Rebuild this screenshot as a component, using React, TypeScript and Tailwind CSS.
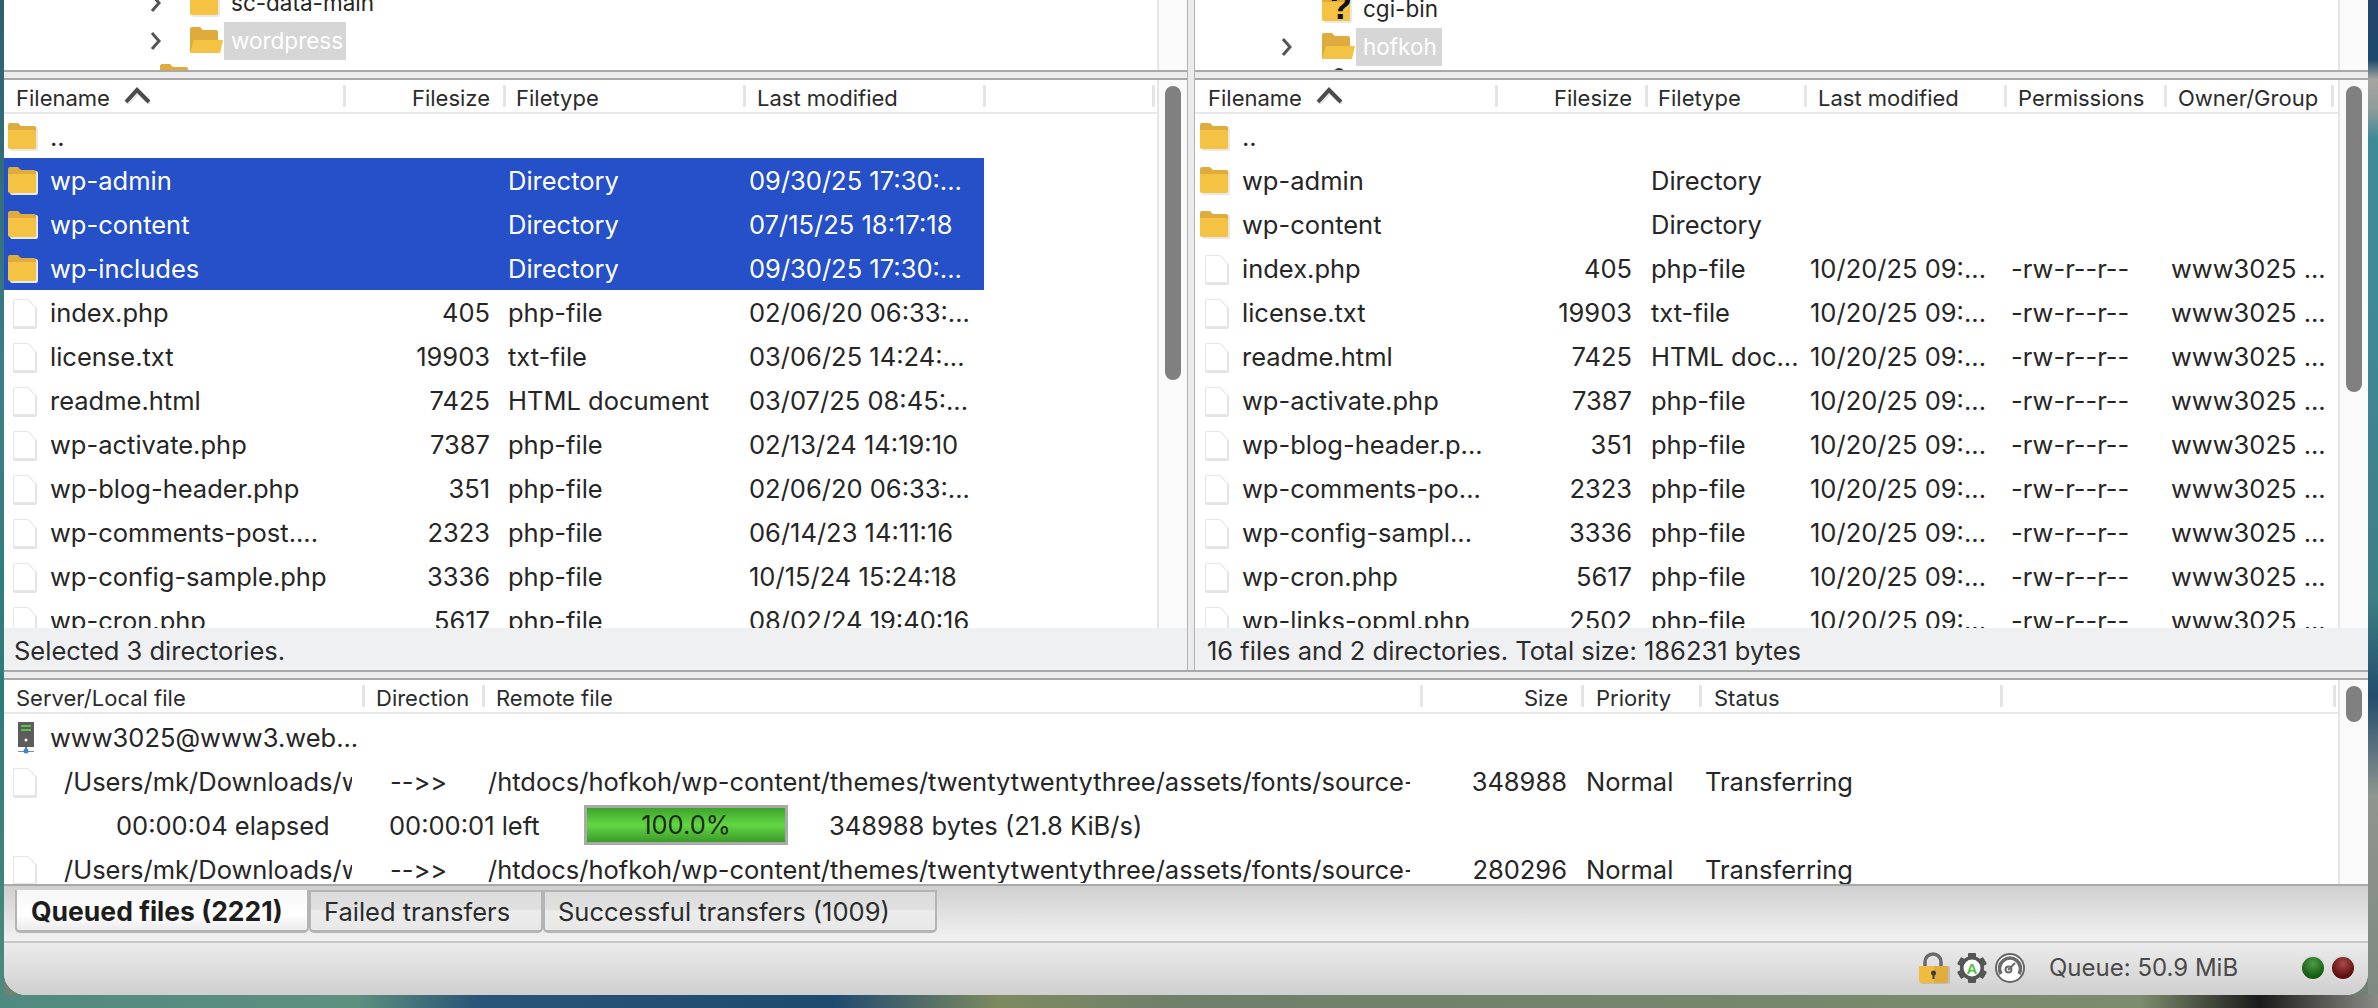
// App.tsx
import React from 'react';

const leftFiles = [
  ['wp-admin', '', 'Directory', '09/30/25 17:30:...'],
  ['wp-content', '', 'Directory', '07/15/25 18:17:18'],
  ['wp-includes', '', 'Directory', '09/30/25 17:30:...'],
  ['index.php', '405', 'php-file', '02/06/20 06:33:...'],
  ['license.txt', '19903', 'txt-file', '03/06/25 14:24:...'],
  ['readme.html', '7425', 'HTML document', '03/07/25 08:45:...'],
  ['wp-activate.php', '7387', 'php-file', '02/13/24 14:19:10'],
  ['wp-blog-header.php', '351', 'php-file', '02/06/20 06:33:...'],
  ['wp-comments-post....', '2323', 'php-file', '06/14/23 14:11:16'],
  ['wp-config-sample.php', '3336', 'php-file', '10/15/24 15:24:18'],
  ['wp-cron.php', '5617', 'php-file', '08/02/24 19:40:16'],
];

const rightFiles = [
  ['index.php', '405', 'php-file'],
  ['license.txt', '19903', 'txt-file'],
  ['readme.html', '7425', 'HTML doc...'],
  ['wp-activate.php', '7387', 'php-file'],
  ['wp-blog-header.p...', '351', 'php-file'],
  ['wp-comments-po...', '2323', 'php-file'],
  ['wp-config-sampl...', '3336', 'php-file'],
  ['wp-cron.php', '5617', 'php-file'],
  ['wp-links-opml.php', '2502', 'php-file'],
];

function FolderIcon() {
  return (
    <svg width="30" height="28" viewBox="0 0 30 28" className="shrink-0">
      <rect x="2" y="4" width="28" height="24" rx="2" fill="#e8e8e8" />
      <path d="M0 2a2 2 0 0 1 2-2h8l3 3h13a2 2 0 0 1 2 2v20H0z" fill="#dfab3d" />
      <path d="M0 7h26a2 2 0 0 1 2 2v15a2 2 0 0 1-2 2H2a2 2 0 0 1-2-2z" fill="#f5c344" />
    </svg>
  );
}

function OpenFolderIcon() {
  return (
    <svg width="34" height="28" viewBox="0 0 34 28" className="shrink-0">
      <path d="M0 2a2 2 0 0 1 2-2h8l3 3h13a2 2 0 0 1 2 2v21H0z" fill="#dfab3d" />
      <path d="M4 13h29l-3 13H0z" fill="#f5c344" />
    </svg>
  );
}

function FileIcon() {
  return (
    <svg width="26" height="31" viewBox="0 0 26 31" className="shrink-0">
      <path d="M1 3a2 2 0 0 1 2-2h13l9 9v19a2 2 0 0 1-2 2H3a2 2 0 0 1-2-2z" fill="#e4e4e4" />
      <path d="M1.500 3a1.500 1.500 0 0 1 1.500-1.500h12.500l8 8V27.500a1 1 0 0 1-1 1H3a1.500 1.500 0 0 1-1.500-1.500z" fill="#ffffff" stroke="#e6e6e6" />
    </svg>
  );
}

function Chevron() {
  return (
    <svg width="12" height="20" viewBox="0 0 12 20" className="shrink-0">
      <path d="M2 2l7 8-7 8" fill="none" stroke="#555555" strokeWidth="3" />
    </svg>
  );
}

function SortArrow() {
  return (
    <svg width="27" height="17" viewBox="0 0 27 17" className="ml-[14px] -mt-[6px] shrink-0">
      <path d="M2 16l11-12 12 12" fill="none" stroke="#e4e4e4" strokeWidth="4" transform="translate(1 1)" />
      <path d="M2 15l11-12 12 12" fill="none" stroke="#4c4c4c" strokeWidth="4" />
    </svg>
  );
}

function HeadCell({ children, className = '', right }: { children?: React.ReactNode; className?: string; right?: boolean }) {
  return (
    <div className={'flex h-full items-center text-[22px] text-[#2b2b2b] ' + className}>
      <span className={'flex items-center pt-[4px] ' + (right ? 'ml-auto' : '')}>{children}</span>
      <span className={'h-[22px] w-[3px] shrink-0 bg-[#e4e4e4] ' + (right ? 'ml-[13px]' : 'ml-auto')} />
    </div>
  );
}

function Track({ thumb }: { thumb: string }) {
  return (
    <div className="w-[30px] shrink-0 border-l-2 border-[#e6e6e6] bg-[#fafafa] pl-[6px] pt-[6px]">
      <div className={'w-[16px] rounded-[8px] bg-[#808080] ' + thumb} />
    </div>
  );
}

function HSplit() {
  return <div className="h-[10px] shrink-0 border-y-2 border-[#a9a9a9] bg-[#ebebeb]" />;
}

function LeftPane() {
  return (
    <div className="flex w-[1183px] shrink-0 flex-col">
      <div className="flex h-[70px] shrink-0 overflow-hidden text-[22.500px]">
        <div className="-mt-[16px] flex-1 text-[#262626]">
          <div className="flex h-[38px] items-center pl-[146px]">
            <Chevron />
            <span className="ml-[28px]"><FolderIcon /></span>
            <span className="ml-[11px]">sc-data-main</span>
          </div>
          <div className="flex h-[38px] items-center pl-[146px]">
            <Chevron />
            <span className="ml-[28px]"><OpenFolderIcon /></span>
            <span className="flex h-[38px] w-[122px] items-center bg-[#d6d6d6] pl-[7px] text-white">wordpress</span>
          </div>
          <div className="flex h-[38px] pl-[156px] pt-[4px]">
            <OpenFolderIcon />
          </div>
        </div>
        <div className="w-[30px] shrink-0 border-l-2 border-[#e6e6e6] bg-[#fafafa]" />
      </div>
      <HSplit />
      <div className="flex min-h-0 flex-1">
        <div className="min-w-0 flex-1 overflow-hidden">
          <div className="grid h-[34px] grid-cols-[342px_160px_240px_240px_169px] border-b-2 border-[#e8e8e8]">
            <HeadCell className="pl-[12px]">Filename<SortArrow /></HeadCell>
            <HeadCell right>Filesize</HeadCell>
            <HeadCell className="pl-[10px]">Filetype</HeadCell>
            <HeadCell className="pl-[11px]">Last modified</HeadCell>
            <HeadCell />
          </div>
          <div className="flex h-[44px] items-center pl-[4px] pt-[2px]">
            <FolderIcon /><span className="ml-[12px]">..</span>
          </div>
          {leftFiles.map(([name, size, type, date], i) => (
            <div key={name} className={'grid h-[44px] w-[980px] grid-cols-[342px_144px_259px_235px] items-center pt-[2px] ' + (i < 3 ? 'bg-[#2550c8] text-white' : '')}>
              <div className={'flex items-center ' + (i < 3 ? 'pl-[4px]' : 'pl-[8px]')}>
                {i < 3 ? <FolderIcon /> : <FileIcon />}
                <span className="ml-[12px]">{name}</span>
              </div>
              <div className="text-right">{size}</div>
              <div className="pl-[18px]">{type}</div>
              <div>{date}</div>
            </div>
          ))}
        </div>
        <Track thumb="h-[294px]" />
      </div>
      <div className="flex h-[42px] shrink-0 items-center bg-[#eff0f2] pl-[10px] pt-[3px] text-[#2b2b2b]">Selected 3 directories.</div>
    </div>
  );
}

function RightPane() {
  return (
    <div className="flex min-w-0 flex-1 flex-col">
      <div className="flex h-[70px] shrink-0 overflow-hidden text-[22.500px]">
        <div className="-mt-[10px] flex-1">
          <div className="flex h-[38px] items-center pl-[127px]">
            <span className="relative">
              <FolderIcon />
              <span className="absolute left-[8px] top-[-8px] font-['Liberation_Sans',sans-serif] text-[36px] font-bold leading-[40px] text-[#111111]">?</span>
            </span>
            <span className="ml-[11px]">cgi-bin</span>
          </div>
          <div className="flex h-[38px] items-center pl-[86px]">
            <Chevron />
            <span className="ml-[29px]"><OpenFolderIcon /></span>
            <span className="flex h-[38px] w-[86px] items-center bg-[#d6d6d6] pl-[7px] text-white">hofkoh</span>
          </div>
          <div className="flex h-[38px] pl-[138px] pt-[2px]">
            <span className="h-[14px] w-[12px] rounded-t-full bg-[#3c3c3c]" />
          </div>
        </div>
        <div className="w-[30px] shrink-0 border-l-2 border-[#e6e6e6] bg-[#fafafa]" />
      </div>
      <HSplit />
      <div className="flex min-h-0 flex-1">
        <div className="min-w-0 flex-1 overflow-hidden">
          <div className="grid h-[34px] grid-cols-[303px_150px_159px_200px_160px_167px] border-b-2 border-[#e8e8e8]">
            <HeadCell className="pl-[13px]">Filename<SortArrow /></HeadCell>
            <HeadCell right>Filesize</HeadCell>
            <HeadCell className="pl-[10px]">Filetype</HeadCell>
            <HeadCell className="pl-[11px]">Last modified</HeadCell>
            <HeadCell className="pl-[11px]">Permissions</HeadCell>
            <HeadCell className="pl-[11px]">Owner/Group</HeadCell>
          </div>
          <div className="flex h-[44px] items-center pl-[5px] pt-[2px]">
            <FolderIcon /><span className="ml-[12px]">..</span>
          </div>
          {['wp-admin', 'wp-content'].map((name) => (
            <div key={name} className="grid h-[44px] grid-cols-[456px_300px] items-center pt-[2px]">
              <div className="flex items-center pl-[5px]">
                <FolderIcon /><span className="ml-[12px]">{name}</span>
              </div>
              <div>Directory</div>
            </div>
          ))}
          {rightFiles.map(([name, size, type]) => (
            <div key={name} className="grid h-[44px] grid-cols-[303px_134px_19px_159px_201px_160px_167px] items-center whitespace-nowrap pt-[2px]">
              <div className="flex items-center pl-[9px]">
                <FileIcon /><span className="ml-[12px]">{name}</span>
              </div>
              <div className="text-right">{size}</div>
              <div />
              <div>{type}</div>
              <div>10/20/25 09:...</div>
              <div>-rw-r--r--</div>
              <div>www3025 ...</div>
            </div>
          ))}
        </div>
        <Track thumb="h-[306px]" />
      </div>
      <div className="flex h-[42px] shrink-0 items-center bg-[#eff0f2] pl-[12px] pt-[3px] text-[#2b2b2b]">16 files and 2 directories. Total size: 186231 bytes</div>
    </div>
  );
}

function ServerIcon() {
  return (
    <svg width="20" height="32" viewBox="0 0 20 32" className="shrink-0">
      <rect x="2" y="0" width="16" height="25" fill="#5c5c5c" />
      <rect x="5" y="3" width="10" height="2" fill="#59c44a" />
      <rect x="5" y="7" width="10" height="2" fill="#59c44a" />
      <circle cx="10" cy="18" r="1.500" fill="#ffffff" />
      <rect x="9" y="25" width="2" height="4" fill="#7a7a7a" />
      <rect x="2" y="29" width="16" height="1" fill="#8a8a8a" />
      <circle cx="10" cy="29" r="2.500" fill="#3c82d8" />
    </svg>
  );
}

function TransferRow({ size }: { size: string }) {
  return (
    <div className="grid h-[44px] grid-cols-[348px_136px_922px_157px_138px_300px] items-center pt-[2px]">
      <div className="flex items-center overflow-hidden whitespace-nowrap pl-[8px]">
        <FileIcon />
        <span className="ml-[26px]">/Users/mk/Downloads/wp</span>
      </div>
      <div className="pl-[38px] [font-variant-ligatures:none]">--&gt;&gt;</div>
      <div className="overflow-hidden whitespace-nowrap">/htdocs/hofkoh/wp-content/themes/twentytwentythree/assets/fonts/source-s</div>
      <div className="text-right">{size}</div>
      <div className="pl-[19px]">Normal</div>
      <div>Transferring</div>
    </div>
  );
}

function TransferQueue() {
  return (
    <div className="flex h-[204px] shrink-0">
      <div className="min-w-0 flex-1 overflow-hidden">
        <div className="grid h-[34px] grid-cols-[361px_120px_938px_161px_118px_301px_333px] border-b-2 border-[#e8e8e8]">
          <HeadCell className="pl-[12px]">Server/Local file</HeadCell>
          <HeadCell className="pl-[11px]">Direction</HeadCell>
          <HeadCell className="pl-[11px]">Remote file</HeadCell>
          <HeadCell right>Size</HeadCell>
          <HeadCell className="pl-[12px]">Priority</HeadCell>
          <HeadCell className="pl-[12px]">Status</HeadCell>
          <HeadCell />
        </div>
        <div className="mt-[1px] flex h-[44px] items-center pl-[12px] pt-[2px]">
          <ServerIcon /><span className="ml-[14px]">www3025@www3.web...</span>
        </div>
        <TransferRow size="348988" />
        <div className="flex h-[44px] items-center pt-[2px]">
          <span className="ml-[112px] w-[273px]">00:00:04 elapsed</span>
          <span className="w-[195px]">00:00:01 left</span>
          <div className="mb-[2px] flex h-[40px] w-[204px] items-center justify-center border-[3px] border-[#a9a9a9] bg-[linear-gradient(to_bottom,#3ca32c,#62d742_50%,#3b9a2a)] text-[#1f2a1a]">100.0%</div>
          <span className="ml-[41px]">348988 bytes (21.8 KiB/s)</span>
        </div>
        <TransferRow size="280296" />
      </div>
      <Track thumb="h-[36px]" />
    </div>
  );
}

function Tab({ children, active, className }: { children: React.ReactNode; active?: boolean; className: string }) {
  return (
    <div
      className={
        'flex h-[43px] items-center rounded-b-[5px] border-x-2 border-b-[3px] border-[#b4b4b4] pt-[2px] ' +
        (active
          ? 'bg-[linear-gradient(to_bottom,#f6f6f6,#ffffff_60%,#ececec)] text-[26.500px] font-bold text-[#1d1d1d] '
          : 'border-t-2 bg-[linear-gradient(to_bottom,#dcdcdc,#e0e0e0_45%,#ececec_50%,#e8e8e8)] text-[#2b2b2b] ') +
        className
      }
    >
      {children}
    </div>
  );
}

function LockIcon() {
  return (
    <svg width="32" height="32" viewBox="0 0 32 32" className="shrink-0">
      <path d="M7 14V10a8 8 0 0 1 16 0v4" fill="none" stroke="#6a6a6a" strokeWidth="3.500" />
      <rect x="2" y="14" width="30" height="18" rx="2" fill="#bdbdbd" />
      <path d="M1 14h15v17H3a2 2 0 0 1-2-2z" fill="#f0bb3e" />
      <path d="M16 14h13a1 1 0 0 1 1 1v14a2 2 0 0 1-2 2H16z" fill="#e0ad3c" />
      <circle cx="15.500" cy="21" r="2.500" fill="#3d3d3d" />
      <rect x="14.500" y="21" width="2" height="6" fill="#3d3d3d" />
    </svg>
  );
}

function GearIcon() {
  return (
    <svg width="30" height="30" viewBox="0 0 30 30" className="shrink-0">
      <g fill="#555555">
        <circle cx="15" cy="15" r="12" />
        <rect x="11" y="0" width="8" height="30" rx="1" />
        <rect x="11" y="0" width="8" height="30" rx="1" transform="rotate(60 15 15)" />
        <rect x="11" y="0" width="8" height="30" rx="1" transform="rotate(120 15 15)" />
      </g>
      <circle cx="15" cy="15" r="8.500" fill="#ffffff" />
      <text x="15" y="20.500" textAnchor="middle" fontFamily="Liberation Sans, sans-serif" fontWeight="700" fontSize="15" fill="#4fc23c">A</text>
    </svg>
  );
}

function GaugeIcon() {
  return (
    <svg width="30" height="30" viewBox="0 0 30 30" className="shrink-0">
      <circle cx="15" cy="15" r="14" fill="#ffffff" stroke="#666666" strokeWidth="2" />
      <path d="M6 21a10.500 10.500 0 1 1 18 0" fill="none" stroke="#6a6a6a" strokeWidth="3.500" />
      <path d="M13 17l7-7" stroke="#6a6a6a" strokeWidth="2" />
      <circle cx="13.500" cy="16.500" r="3" fill="none" stroke="#6a6a6a" strokeWidth="2" />
    </svg>
  );
}

export default function App() {
  return (
    <div className="flex h-[1008px] w-[2378px] flex-col overflow-hidden bg-[#6f8171] font-['Inter','Liberation_Sans',sans-serif] text-[25.500px] leading-none text-[#262626]">
      <div className="flex h-[995px] shrink-0">
        <div className="w-[4px] shrink-0 bg-[linear-gradient(to_bottom,#2e5f6e,#3a8088_40%,#2f7a78_70%,#4e8a7c)]" />
        <div className="flex w-[2364px] shrink-0 flex-col overflow-hidden rounded-b-[22px] bg-white">
          <div className="flex h-[670px] shrink-0">
            <LeftPane />
            <div className="w-[8px] shrink-0 border-x border-[#b2b2b2] bg-[#ebebeb]" />
            <RightPane />
          </div>
          <HSplit />
          <TransferQueue />
          <div className="flex h-[57px] shrink-0 items-start border-t-2 border-[#a9a9a9] bg-[linear-gradient(to_bottom,#cfcfcf,#f2f2f2)] pl-[11px] pt-[4px]">
            <Tab active className="w-[294px] pl-[14px]">Queued files (2221)</Tab>
            <Tab className="w-[234px] pl-[13px]">Failed transfers</Tab>
            <Tab className="w-[394px] pl-[13px]">Successful transfers (1009)</Tab>
          </div>
          <div className="flex h-[54px] shrink-0 items-center border-t-2 border-[#c8c8c8] bg-[linear-gradient(to_bottom,#ececec,#cfcfcf)] pb-[2px] pl-[1914px]">
            <LockIcon />
            <span className="ml-[7px]"><GearIcon /></span>
            <span className="ml-[8px]"><GaugeIcon /></span>
            <span className="ml-[24px] w-[251px] whitespace-nowrap text-[24px] text-[#4a4a4a]">Queue: 50.9 MiB</span>
            <span className="h-[26px] w-[26px] rounded-full border-2 border-[#dcdcdc] bg-[radial-gradient(circle_at_50%_30%,#4f9a4a,#145c10_70%)]" />
            <span className="ml-[4px] h-[26px] w-[26px] rounded-full border-2 border-[#dcdcdc] bg-[radial-gradient(circle_at_50%_30%,#a84a4a,#5c0d0d_70%)]" />
          </div>
        </div>
        <div className="flex-1 bg-[linear-gradient(to_bottom,#24436e_0%,#1b4a6e_6%,#a5a5a0_8%,#8f9a9a_11%,#3d8a99_14%,#3d8a99_30%,#3c7f85_60%,#234d6e_70%,#8f958f_80%,#7f8a80_100%)]" />
      </div>
      <div className="flex-1 bg-[linear-gradient(to_right,#4f8a80_0%,#5f8f7f_15%,#2a5578_20%,#1f4a70_35%,#7d8a60_42%,#6f7f6a_50%,#7c8c6c_90%,#1a1a1a_95%,#8a8a85_100%)]" />
    </div>
  );
}
